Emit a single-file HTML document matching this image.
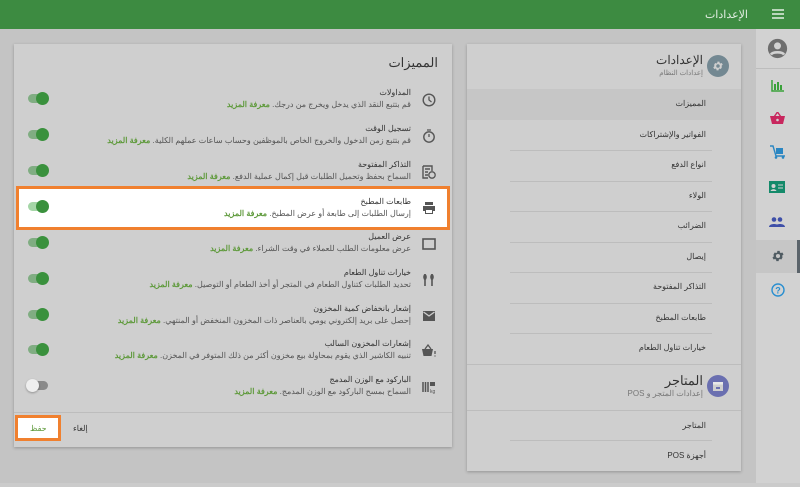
<!DOCTYPE html>
<html><head><meta charset="utf-8"><style>
*{margin:0;padding:0;box-sizing:border-box}
body{width:800px;height:487px;overflow:hidden;background:#c4c4c4;font-family:"Liberation Sans","Noto Sans CJK SC",sans-serif;position:relative;color:#333}
.abs{position:absolute}
.top{left:0;top:0;width:800px;height:29px;background:#3d8b41}
.card{background:#cfcfcf;box-shadow:0 1px 3px rgba(0,0,0,.25)}
.row{position:absolute;left:14px;width:438px;height:36px}
.t{position:absolute;right:41px;top:5px;font-size:8px;color:#333;direction:rtl;white-space:nowrap}
.d{position:absolute;right:41px;top:17px;font-size:8px;color:#555;direction:rtl;white-space:nowrap}
.d b{color:#5f9a3c;font-weight:bold}
.ic{position:absolute;right:16px;top:10px;width:14px;height:14px}
.tg{position:absolute;left:14px;top:11px;width:20px;height:9px;border-radius:5px;background:#80ad82}
.tg::after{content:"";position:absolute;left:8px;top:-2px;width:13px;height:13px;border-radius:50%;background:#3a913d}
.tg.off{background:#8a8a8a}.tg.off::after{left:-2px;background:#eee;box-shadow:0 1px 2px rgba(0,0,0,.3)}
.nav{position:absolute;left:467px;width:274px;height:30px}
.nav span{position:absolute;right:35px;top:10px;font-size:8px;color:#333;direction:rtl;white-space:nowrap}
.sep{position:absolute;left:510px;width:202px;height:1px;background:#bdbdbd}
</style></head><body>
<div class="abs top"></div>
<div class="abs" style="right:52px;top:8px;font-size:11px;color:#e4efe4;direction:rtl">الإعدادات</div>
<svg class="abs" style="left:772px;top:9px" width="12" height="10"><path d="M0 1h12M0 5h12M0 9h12" stroke="#e4efe4" stroke-width="1.5"/></svg>
<div class="abs" style="left:756px;top:29px;width:44px;height:454px;background:#d2d2d2"></div>
<div class="abs" style="left:0;top:483px;width:800px;height:4px;background:#cbcbcb"></div>

<!-- sidebar -->
<svg class="abs" style="left:767px;top:38px" width="21" height="21" viewBox="0 0 24 24"><circle cx="12" cy="12" r="11" fill="#6e6e6e"/><circle cx="12" cy="9" r="4" fill="#d2d2d2"/><path d="M4.5 19c2-3.5 13-3.5 15 0" stroke="#d2d2d2" stroke-width="3" fill="none"/></svg>
<div class="abs" style="left:756px;top:68px;width:44px;height:1px;background:#bdbdbd"></div>
<svg class="abs" style="left:771px;top:80px" width="13" height="12"><path d="M1 0v11h12" stroke="#3aa13a" stroke-width="1.5" fill="none"/><path d="M4 4v6M7 2v8M10 5v5" stroke="#3aa13a" stroke-width="2"/></svg>
<svg class="abs" style="left:770px;top:112px" width="15" height="12"><path d="M4 5L7.5 0 11 5" stroke="#c8275e" fill="none" stroke-width="1.4"/><path d="M0 4h15l-2 8H2z" fill="#c8275e"/><circle cx="7.5" cy="8" r="1.3" fill="#d2d2d2"/></svg>
<svg class="abs" style="left:770px;top:145px" width="15" height="14"><path d="M0 1h3l3 10h9" stroke="#2a86c2" fill="none" stroke-width="1.4"/><rect x="6" y="3" width="7" height="6" fill="#2a86c2"/><circle cx="6" cy="12.5" r="1.3" fill="#2a86c2"/><circle cx="13" cy="12.5" r="1.3" fill="#2a86c2"/></svg>
<svg class="abs" style="left:769px;top:181px" width="16" height="12"><rect width="16" height="12" fill="#148a6a"/><circle cx="4.5" cy="5" r="2" fill="#d2d2d2"/><path d="M1.5 10c1-2.5 5-2.5 6 0z" fill="#d2d2d2"/><path d="M9 4h5M9 7h5" stroke="#d2d2d2"/></svg>
<svg class="abs" style="left:769px;top:217px" width="16" height="10"><circle cx="5" cy="2.5" r="2.3" fill="#3e4fa8"/><circle cx="11" cy="2.5" r="2.3" fill="#3e4fa8"/><path d="M0 10c0-4 10-4 10 0zM6 10c0-4 10-4 10 0z" fill="#3e4fa8"/></svg>
<div class="abs" style="left:756px;top:240px;width:44px;height:33px;background:#c6c6c6"></div>
<div class="abs" style="left:797px;top:240px;width:3px;height:33px;background:#5a636a"></div>
<svg class="abs" style="left:771px;top:249px" width="14" height="14" viewBox="0 0 24 24"><path fill="#4f5b62" d="M19.4 13a7.5 7.5 0 000-2l2.1-1.6-2-3.5-2.5 1a7.3 7.3 0 00-1.7-1l-.4-2.7h-4l-.4 2.7a7.3 7.3 0 00-1.7 1l-2.5-1-2 3.5L4.6 11a7.5 7.5 0 000 2l-2.1 1.6 2 3.5 2.5-1c.5.4 1.1.7 1.7 1l.4 2.7h4l.4-2.7c.6-.3 1.2-.6 1.7-1l2.5 1 2-3.5zM12 15.5a3.5 3.5 0 110-7 3.5 3.5 0 010 7z"/></svg>
<svg class="abs" style="left:771px;top:283px" width="14" height="14"><circle cx="7" cy="7" r="6" stroke="#2a8fd0" stroke-width="1.4" fill="none"/><text x="7" y="10.5" font-size="9" text-anchor="middle" fill="#2a8fd0" font-family="Liberation Sans" font-weight="bold">?</text></svg>

<!-- left card -->
<div class="abs card" style="left:14px;top:44px;width:438px;height:403px"></div>
<div class="abs" style="right:362px;top:55px;font-size:13px;color:#333;direction:rtl">المميزات</div>

<div class="row" style="top:83px"><div class="t">المداولات</div><div class="d">قم بتتبع النقد الذي يدخل ويخرج من درجك. <b>معرفة المزيد</b></div><svg class="ic" viewBox="0 0 14 14"><circle cx="7" cy="7" r="5.8" stroke="#555" stroke-width="1.4" fill="none"/><path d="M7 3.5V7l2.5 2" stroke="#555" stroke-width="1.3" fill="none"/></svg><div class="tg"></div></div>
<div class="row" style="top:119px"><div class="t">تسجيل الوقت</div><div class="d">قم بتتبع زمن الدخول والخروج الخاص بالموظفين وحساب ساعات عملهم الكلية. <b>معرفة المزيد</b></div><svg class="ic" viewBox="0 0 14 14"><circle cx="7" cy="8" r="5.2" stroke="#555" stroke-width="1.4" fill="none"/><path d="M5 1h4M7 8V5" stroke="#555" stroke-width="1.3"/></svg><div class="tg"></div></div>
<div class="row" style="top:155px"><div class="t">التذاكر المفتوحة</div><div class="d">السماح بحفظ وتحميل الطلبات قبل إكمال عملية الدفع. <b>معرفة المزيد</b></div><svg class="ic" viewBox="0 0 14 14"><path d="M1 1h9v5M1 1v12h5M3 4h5M3 7h3M3 10h3" stroke="#555" stroke-width="1.4" fill="none"/><circle cx="10" cy="10" r="3.2" stroke="#555" stroke-width="1.3" fill="none"/></svg><div class="tg"></div></div>
<div class="abs" style="left:16px;top:186px;width:434px;height:44px;background:#fff;border:3px solid #f0802f"></div>
<div class="row" style="top:190px"><div class="t" style="top:7px">طابعات المطبخ</div><div class="d" style="top:19px">إرسال الطلبات إلى طابعة أو عرض المطبخ. <b>معرفة المزيد</b></div><svg class="ic" style="top:11px" viewBox="0 0 14 14"><path d="M3 1h8v3H3zM1 5h12v5h-2v3H3v-3H1z" fill="#555"/><rect x="4" y="9" width="6" height="3" fill="#fff"/></svg><div class="tg" style="background:#a5d6a7;top:12px"></div></div>
<style>.row:nth-of-type(0){}</style>
<div class="row" style="top:227px"><div class="t">عرض العميل</div><div class="d">عرض معلومات الطلب للعملاء في وقت الشراء. <b>معرفة المزيد</b></div><svg class="ic" viewBox="0 0 14 14"><rect x="1" y="2" width="12" height="10" stroke="#555" stroke-width="1.6" fill="none"/></svg><div class="tg"></div></div>
<div class="row" style="top:263px"><div class="t">خيارات تناول الطعام</div><div class="d">تحديد الطلبات كتناول الطعام في المتجر أو أخذ الطعام أو التوصيل. <b>معرفة المزيد</b></div><svg class="ic" viewBox="0 0 14 14"><path d="M3 1v12M10 1v12" stroke="#555" stroke-width="1.6"/><ellipse cx="3" cy="4" rx="1.8" ry="3" fill="#555"/><ellipse cx="10" cy="4" rx="1.8" ry="3" fill="#555"/></svg><div class="tg"></div></div>
<div class="row" style="top:299px"><div class="t">إشعار بانخفاض كمية المخزون</div><div class="d">إحصل على بريد إلكتروني يومي بالعناصر ذات المخزون المنخفض أو المنتهي. <b>معرفة المزيد</b></div><svg class="ic" viewBox="0 0 14 14"><rect x="1" y="2" width="12" height="10" fill="#555"/><path d="M1.5 3L7 7l5.5-4" stroke="#cfcfcf" stroke-width="1.3" fill="none"/></svg><div class="tg"></div></div>
<div class="row" style="top:334px"><div class="t">إشعارات المخزون السالب</div><div class="d">تنبيه الكاشير الذي يقوم بمحاولة بيع مخزون أكثر من ذلك المتوفر في المخزن. <b>معرفة المزيد</b></div><svg class="ic" viewBox="0 0 14 14"><path d="M3 5l3-4 3 4" stroke="#555" fill="none" stroke-width="1.3"/><path d="M0 5h11l-1.5 7H1.5z" fill="#555"/><path d="M13 7v3M13 11.5v1" stroke="#555" stroke-width="1.3"/></svg><div class="tg"></div></div>
<div class="row" style="top:370px"><div class="t">الباركود مع الوزن المدمج</div><div class="d">السماح بمسح الباركود مع الوزن المدمج. <b>معرفة المزيد</b></div><svg class="ic" viewBox="0 0 14 14"><path d="M1 2v10M3.5 2v10M6 2v10" stroke="#555" stroke-width="1.5"/><rect x="8" y="2" width="5" height="4" fill="#555"/><text x="8" y="13" font-size="5" fill="#555" font-family="Liberation Sans">kg</text></svg><div class="tg off"></div></div>
<div class="abs" style="left:14px;top:412px;width:438px;height:1px;background:#bdbdbd"></div>
<div class="abs" style="left:15px;top:415px;width:46px;height:26px;background:#fff;border:3px solid #f0802f"></div>
<div class="abs" style="left:30px;top:424px;font-size:8px;color:#5f9a3c">حفظ</div>
<div class="abs" style="left:73px;top:424px;font-size:8px;color:#333">إلغاء</div>

<!-- right card -->
<div class="abs card" style="left:467px;top:44px;width:274px;height:427px"></div>
<svg class="abs" style="left:707px;top:55px" width="22" height="22" viewBox="0 0 22 22"><circle cx="11" cy="11" r="11" fill="#738892"/><g transform="translate(5 5) scale(.5)"><path fill="#cfcfcf" d="M19.4 13a7.5 7.5 0 000-2l2.1-1.6-2-3.5-2.5 1a7.3 7.3 0 00-1.7-1l-.4-2.7h-4l-.4 2.7a7.3 7.3 0 00-1.7 1l-2.5-1-2 3.5L4.6 11a7.5 7.5 0 000 2l-2.1 1.6 2 3.5 2.5-1c.5.4 1.1.7 1.7 1l.4 2.7h4l.4-2.7c.6-.3 1.2-.6 1.7-1l2.5 1 2-3.5zM12 15.5a3.5 3.5 0 110-7 3.5 3.5 0 010 7z"/></g></svg>
<div class="abs" style="right:97px;top:53px;font-size:12px;color:#333;direction:rtl">الإعدادات</div>
<div class="abs" style="right:97px;top:69px;font-size:7px;color:#777;direction:rtl">إعدادات النظام</div>
<div class="abs" style="left:467px;top:89px;width:274px;height:31px;background:#c6c6c6"></div>
<div class="nav" style="top:89px"><span>المميزات</span></div>
<div class="nav" style="top:120px"><span>الفواتير والإشتراكات</span></div><div class="sep" style="top:150px"></div>
<div class="nav" style="top:150px"><span>انواع الدفع</span></div><div class="sep" style="top:181px"></div>
<div class="nav" style="top:181px"><span>الولاء</span></div><div class="sep" style="top:211px"></div>
<div class="nav" style="top:211px"><span>الضرائب</span></div><div class="sep" style="top:242px"></div>
<div class="nav" style="top:242px"><span>إيصال</span></div><div class="sep" style="top:272px"></div>
<div class="nav" style="top:272px"><span>التذاكر المفتوحة</span></div><div class="sep" style="top:303px"></div>
<div class="nav" style="top:303px"><span>طابعات المطبخ</span></div><div class="sep" style="top:333px"></div>
<div class="nav" style="top:333px"><span>خيارات تناول الطعام</span></div>
<div class="abs" style="left:467px;top:364px;width:274px;height:1px;background:#bdbdbd"></div>
<svg class="abs" style="left:707px;top:375px" width="22" height="22"><circle cx="11" cy="11" r="11" fill="#6a6fb0"/><rect x="6" y="7" width="10" height="9" fill="#cfcfcf"/><rect x="6" y="7" width="10" height="2.5" fill="#e8e8e8"/><rect x="9" y="12" width="4" height="2" fill="#6a6fb0"/></svg>
<div class="abs" style="right:97px;top:373px;font-size:13px;color:#333;direction:rtl">المتاجر</div>
<div class="abs" style="right:97px;top:389px;font-size:8px;color:#777;direction:rtl">إعدادات المتجر و POS</div>
<div class="abs" style="left:467px;top:410px;width:274px;height:1px;background:#bdbdbd"></div>
<div class="nav" style="top:411px"><span>المتاجر</span></div><div class="sep" style="top:440px"></div>
<div class="nav" style="top:441px"><span>أجهزة POS</span></div>
</body></html>
